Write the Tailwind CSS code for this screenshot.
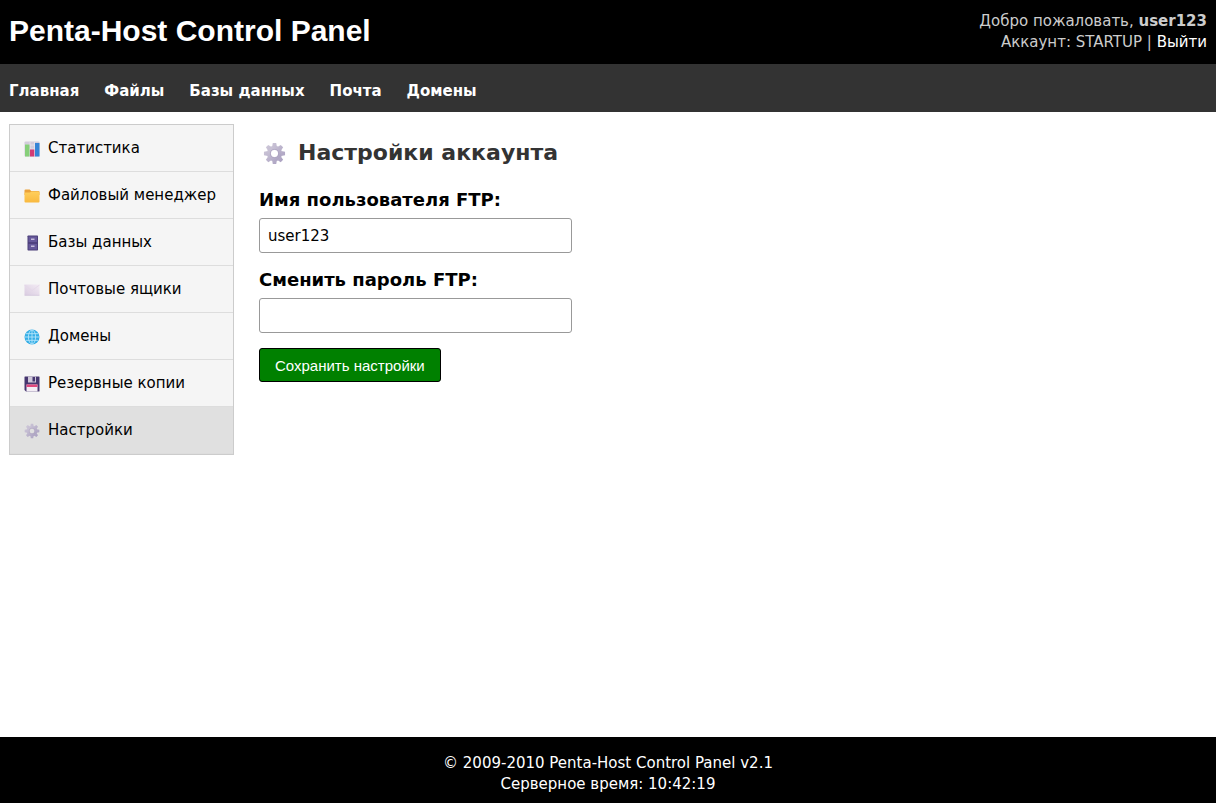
<!DOCTYPE html>
<html lang="ru">
<head>
    <meta charset="UTF-8">
    <meta name="viewport" content="width=device-width, initial-scale=1.0">
    <title>Penta-Host Control Panel</title>
    <script src="https://cdn.jsdelivr.net/npm/@tailwindcss/browser@4"></script>
</head>
<body class="min-h-screen flex flex-col bg-white text-black font-[Verdana,'DejaVu_Sans',sans-serif] text-[15px] leading-[21px]">
    <!-- Gradients and the gear shared by the icons -->
    <svg class="absolute w-0 h-0" aria-hidden="true">
        <defs>
            <linearGradient id="gearFill" x1="0" y1="0" x2="1" y2="1">
                <stop offset="0" stop-color="#d3cddc"/><stop offset="1" stop-color="#a59bbd"/>
            </linearGradient>
            <linearGradient id="mailFill" x1="0" y1="1" x2="1" y2="0">
                <stop offset="0" stop-color="#d9cbe0"/><stop offset="1" stop-color="#f3ecf4"/>
            </linearGradient>
            <linearGradient id="folderFill" x1="0" y1="0" x2="0" y2="1">
                <stop offset="0" stop-color="#ffcf5c"/><stop offset="1" stop-color="#f9b93f"/>
            </linearGradient>
            <symbol id="gear" viewBox="0 0 24 24">
                <g fill="url(#gearFill)">
                    <path fill-rule="evenodd" d="M12 4a8 8 0 1 0 0 16a8 8 0 0 0 0-16zM12 8.200a3.800 3.800 0 1 1 0 7.600a3.800 3.800 0 0 1 0-7.600z"/>
                    <path d="M9.500 5l.7-4h3.600l.7 4zM9.500 19l.7 4h3.600l.7-4zM5 9.500l-4 .7v3.600l4 .7zM19 9.500l4 .7v3.600l-4 .7zM5.300 9L3 5.500l2.500-2.500l3.500 2.300zM18.700 9l2.300-3.500l-2.500-2.500l-3.500 2.300zM5.300 15l-2.300 3.500l2.500 2.500l3.500-2.300zM18.700 15l2.300 3.500l-2.500 2.500l-3.500-2.300z"/>
                </g>
                <circle cx="12" cy="12" r="4.200" fill="none" stroke="#a89dbd" stroke-width=".7"/>
            </symbol>
        </defs>
    </svg>

    <!-- Header -->
    <header class="bg-black text-[#ccc] flex justify-between px-[9px] pt-[11px] pb-[11px]">
        <h1 class="font-['Liberation_Sans',Arial,sans-serif] font-bold text-[30px] leading-[40px] text-white">Penta-Host Control Panel</h1>
        <div class="text-right">
            <p>Добро пожаловать, <b>user123</b></p>
            <p>Аккаунт: STARTUP | <a href="#" class="text-white">Выйти</a></p>
        </div>
    </header>

    <!-- Main menu -->
    <nav class="bg-[#333] flex gap-[25px] px-[9px] pt-[17px] pb-[10px] font-bold text-white">
        <a href="#">Главная</a>
        <a href="#">Файлы</a>
        <a href="#">Базы данных</a>
        <a href="#">Почта</a>
        <a href="#">Домены</a>
    </nav>

    <div class="flex-1 flex items-start gap-[25px] px-[9px] py-3">
        <!-- Sidebar -->
        <aside class="w-[225px] shrink-0 border border-[#ccc] bg-[#f5f5f5]">
            <ul>
                <li class="border-b border-[#ddd]">
                    <a href="#" class="flex items-center gap-2 px-[14px] pt-[13px] pb-3">
                        <svg class="w-4 h-4" viewBox="0 0 16 16">
                            <rect x=".5" y=".5" width="15" height="15" rx="1" fill="#d3ccdc"/>
                            <path d="M1 4h14M1 8h14M1 12h14M6 1v14M10.500 1v14" stroke="#ebe6ef" stroke-width=".7"/>
                            <rect x="1" y="3.500" width="4.500" height="12" fill="#86cf79"/>
                            <rect x="6" y="8.500" width="4.300" height="7" fill="#d23b75"/>
                            <rect x="11" y="2" width="4.500" height="13.500" fill="#3584d6"/>
                        </svg>
                        Статистика
                    </a>
                </li>
                <li class="border-b border-[#ddd]">
                    <a href="#" class="flex items-center gap-2 px-[14px] pt-[13px] pb-3">
                        <svg class="w-4 h-4" viewBox="0 0 16 16">
                            <path d="M.500 2.500q0-1 1-1h4.200l1.500 1.500h7.300q1 0 1 1v3h-15z" fill="#eba23a"/>
                            <path d="M.500 5.500q0-1 1-1h4.500l1.500-1h7q1 0 1 1v9q0 1-1 1h-13q-1 0-1-1z" fill="url(#folderFill)"/>
                        </svg>
                        Файловый менеджер
                    </a>
                </li>
                <li class="border-b border-[#ddd]">
                    <a href="#" class="flex items-center gap-2 px-[14px] pt-[13px] pb-3">
                        <svg class="w-4 h-4" viewBox="0 0 16 16">
                            <rect x="3.500" y=".5" width="10.500" height="15" rx=".7" fill="#4b3e78"/>
                            <rect x="4.500" y="1.500" width="8.500" height="5.700" fill="#66589a"/>
                            <rect x="4.500" y="8.800" width="8.500" height="5.700" fill="#66589a"/>
                            <path d="M7 3.500h3.500v1.500h-3.500zM7 10.500h3.500v1.500h-3.500z" fill="#c5bcdb"/>
                        </svg>
                        Базы данных
                    </a>
                </li>
                <li class="border-b border-[#ddd]">
                    <a href="#" class="flex items-center gap-2 px-[14px] pt-[13px] pb-3">
                        <svg class="w-4 h-4" viewBox="0 0 16 16">
                            <rect x=".5" y="2.500" width="15" height="11" rx=".7" fill="url(#mailFill)"/>
                            <path d="M.500 3l7.500 5.500l7.500-5.500" fill="none" stroke="#e3d7e7" stroke-width=".8"/>
                            <path d="M.500 13.300h15" stroke="#cdbfd6" stroke-width=".6"/>
                        </svg>
                        Почтовые ящики
                    </a>
                </li>
                <li class="border-b border-[#ddd]">
                    <a href="#" class="flex items-center gap-2 px-[14px] pt-[13px] pb-3">
                        <svg class="w-4 h-4" viewBox="0 0 16 16">
                            <circle cx="8" cy="8" r="7.500" fill="#35aee6"/>
                            <g fill="none" stroke="#b5e5fa" stroke-width=".9">
                                <ellipse cx="8" cy="8" rx="3.600" ry="7"/>
                                <path d="M8 1v14M1 8h14M2 4.700h12M2 11.300h12"/>
                            </g>
                        </svg>
                        Домены
                    </a>
                </li>
                <li class="border-b border-[#ddd]">
                    <a href="#" class="flex items-center gap-2 px-[14px] pt-[13px] pb-3">
                        <svg class="w-4 h-4" viewBox="0 0 16 16">
                            <path d="M.500 1q0-.500.500-.500h14q.500 0 .500.500v14q0 .500-.500.500h-13l-1.500-1.500z" fill="#46366f"/>
                            <rect x="4" y=".5" width="8" height="6" fill="#cfc8da"/>
                            <rect x="8.500" y="1" width="2.500" height="4.500" fill="#46366f"/>
                            <rect x="2.500" y="8.500" width="11" height="7" fill="#f3edf5"/>
                            <rect x="2.500" y="8.500" width="11" height="2.500" fill="#e0487d"/>
                        </svg>
                        Резервные копии
                    </a>
                </li>
                <li class="border-b border-[#ddd] bg-[#e0e0e0]">
                    <a href="#" aria-current="page" class="flex items-center gap-2 px-[14px] pt-[13px] pb-3">
                        <svg class="w-4 h-4"><use href="#gear"/></svg>
                        Настройки
                    </a>
                </li>
            </ul>
        </aside>

        <!-- Account settings -->
        <main class="flex-1">
            <h2 class="flex items-center gap-3 pl-1 pt-3 text-[22px] leading-[34px] font-bold text-[#333]">
                <svg class="w-[23px] h-[23px]"><use href="#gear"/></svg>
                Настройки аккаунта
            </h2>
            <form class="mt-[17px] flex flex-col items-start">
                <label for="ftpUser" class="text-[18px] leading-[26px] font-bold">Имя пользователя FTP:</label>
                <input type="text" id="ftpUser" value="user123" class="mt-[5px] w-[313px] h-[35px] px-2 border border-[#999] rounded-[3px] bg-white">
                <label for="ftpPass" class="mt-[14px] text-[18px] leading-[26px] font-bold">Сменить пароль FTP:</label>
                <input type="password" id="ftpPass" class="mt-[5px] w-[313px] h-[35px] px-2 border border-[#999] rounded-[3px] bg-white">
                <button type="submit" class="mt-[15px] h-[34px] px-[15px] border border-black rounded-[3px] bg-[green] text-white font-['Liberation_Sans',Arial,sans-serif] text-[15px]">Сохранить настройки</button>
            </form>
        </main>
    </div>

    <!-- Footer -->
    <footer class="bg-black text-white text-center pt-4 pb-2">
        <p>© 2009-2010 Penta-Host Control Panel v2.1</p>
        <p>Серверное время: <span>10:42:19</span></p>
    </footer>
</body>
</html>
